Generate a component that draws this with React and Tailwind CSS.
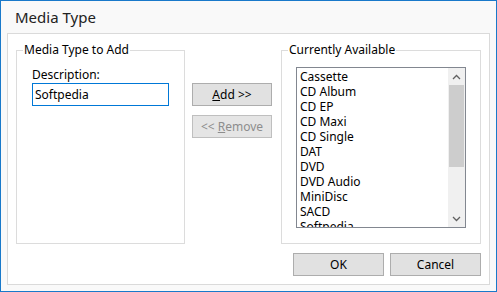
import React from 'react';

const items = [
  'Cassette',
  'CD Album',
  'CD EP',
  'CD Maxi',
  'CD Single',
  'DAT',
  'DVD',
  'DVD Audio',
  'MiniDisc',
  'SACD',
  'Softpedia',
];

const Chevron = ({ up }) => (
  <svg width="9" height="6" viewBox="0 0 9 6">
    <path
      d={up ? 'M1 5 L4.5 1.5 L8 5' : 'M1 1 L4.5 4.5 L8 1'}
      fill="none"
      stroke="#606060"
      strokeWidth="1.3"
    />
  </svg>
);

const GroupBox = ({ title, className, innerClass, children }) => (
  <fieldset className={`border border-[#dcdcdc] ${className}`}>
    <legend className="ml-[6px] px-[1px] text-[12px] leading-[16px] text-black">{title}</legend>
    <div className={innerClass}>{children}</div>
  </fieldset>
);

const App = () => {
  return (
    <div className="w-[497px] h-[292px] border border-[#1979ca] bg-[#f9f9f9] flex flex-col font-['Noto_Sans',sans-serif]">
      {/* Title bar */}
      <div className="h-[32px] flex items-center pl-[14px] text-[15px] text-[#222]">Media Type</div>

      {/* Dialog body */}
      <div className="mx-[6px] mb-[6px] flex-1 border border-[#dadada] bg-white flex flex-col pt-[8px] px-[8px] pb-[8px]">
        <div className="flex">
          <GroupBox title="Media Type to Add" className="w-[169px] h-[202px]" innerClass="px-[15px]">
            <div className="mt-[9px] text-[12px] leading-[16px] text-black">Description:</div>
            <div className="w-[137px] h-[23px] border border-[#0078d7] px-[2px] flex items-center text-[12px] text-black">
              Softpedia
            </div>
          </GroupBox>

          <div className="ml-[7px] w-[80px] flex flex-col gap-[9px] pt-[41px]">
            <button className="h-[23px] border border-[#adadad] bg-[#e1e1e1] text-[12px] text-black">
              <span className="underline">A</span>dd &gt;&gt;
            </button>
            <button className="h-[23px] border border-[#bfbfbf] bg-[#e5e5e5] text-[12px] text-[#8d8d8d]">
              &lt;&lt; <span className="underline">R</span>emove
            </button>
          </div>

          <GroupBox title="Currently Available" className="ml-[9px] w-[200px] h-[202px]" innerClass="px-[14px]">
            <div className="mt-[9px] h-[161px] border border-[#828790] flex">
              <div className="flex-1 overflow-hidden pl-[3px] pt-[1px] text-[12px] leading-[15px] text-black">
                {items.map((item) => (
                  <div key={item}>{item}</div>
                ))}
              </div>
              <div className="w-[17px] bg-[#f0f0f0] flex flex-col">
                <div className="h-[17px] flex items-center justify-center">
                  <Chevron up />
                </div>
                <div className="h-[82px] mx-[1px] bg-[#cdcdcd]" />
                <div className="flex-1" />
                <div className="h-[17px] flex items-center justify-center">
                  <Chevron />
                </div>
              </div>
            </div>
          </GroupBox>
        </div>

        <div className="mt-auto flex justify-end gap-[6px]">
          <button className="w-[91px] h-[23px] border border-[#adadad] bg-[#e1e1e1] text-[12px] text-black">OK</button>
          <button className="w-[91px] h-[23px] border border-[#adadad] bg-[#e1e1e1] text-[12px] text-black">Cancel</button>
        </div>
      </div>
    </div>
  );
};

export default App;
